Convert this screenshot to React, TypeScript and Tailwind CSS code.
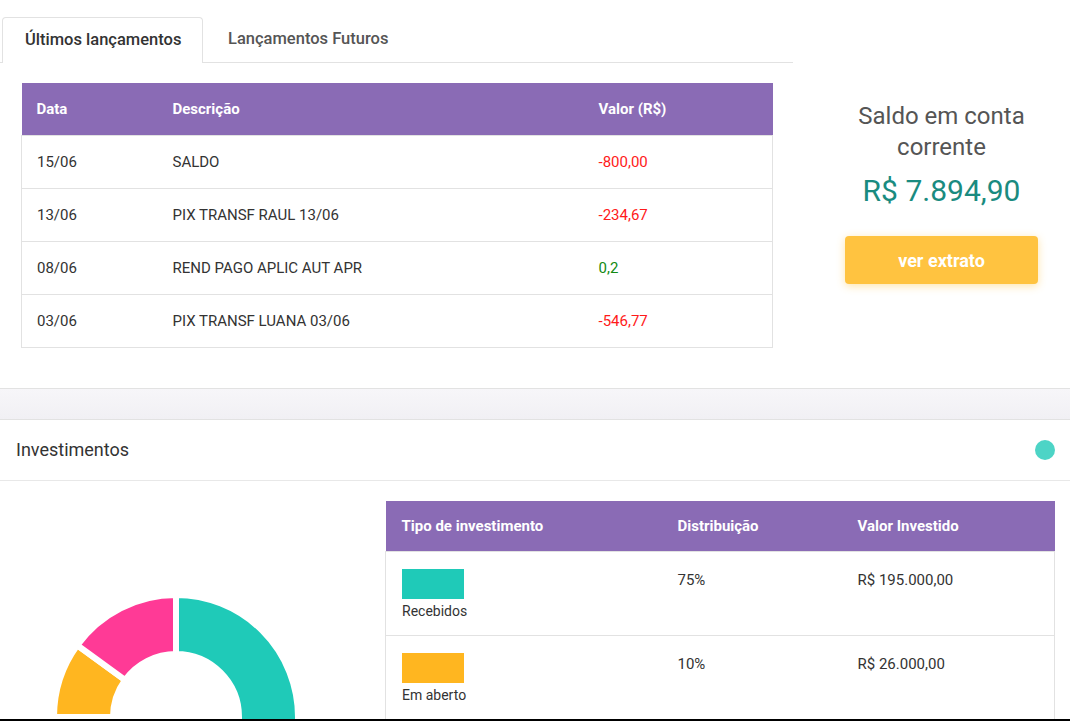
import React from "react";

const lancamentos = [
  { data: "15/06", desc: "SALDO", valor: "-800,00", neg: true },
  { data: "13/06", desc: "PIX TRANSF RAUL 13/06", valor: "-234,67", neg: true },
  { data: "08/06", desc: "REND PAGO APLIC AUT APR", valor: "0,2", neg: false },
  { data: "03/06", desc: "PIX TRANSF LUANA 03/06", valor: "-546,77", neg: true },
];

const investimentos = [
  { tipo: "Recebidos", cor: "bg-[#1fcab8]", dist: "75%", valor: "R$ 195.000,00" },
  { tipo: "Em aberto", cor: "bg-[#ffb620]", dist: "10%", valor: "R$ 26.000,00" },
];

// arc segment of a donut, angles in degrees from 12 o'clock clockwise
const arc = (cx: number, cy: number, r1: number, r2: number, a0: number, a1: number) => {
  const p = (r: number, a: number) => {
    const rad = ((a - 90) * Math.PI) / 180;
    return `${cx + r * Math.cos(rad)} ${cy + r * Math.sin(rad)}`;
  };
  const large = a1 - a0 > 180 ? 1 : 0;
  return `M ${p(r2, a0)} A ${r2} ${r2} 0 ${large} 1 ${p(r2, a1)} L ${p(r1, a1)} A ${r1} ${r1} 0 ${large} 0 ${p(r1, a0)} Z`;
};

const Donut = () => {
  const cx = 160;
  const cy = 216;
  const segs = [
    { a0: 0, a1: 270, fill: "#1fcab8" },
    { a0: 270, a1: 306, fill: "#ffb620" },
    { a0: 306, a1: 360, fill: "#ff3a96" },
  ];
  return (
    <svg width="340" height="220" viewBox="0 0 340 220">
      {segs.map((s) => (
        <path
          key={s.a0}
          d={arc(cx, cy, 63, 122, s.a0, s.a1)}
          fill={s.fill}
          stroke="#ffffff"
          strokeWidth="6"
        />
      ))}
    </svg>
  );
};

const App = () => {
  return (
    <div
      className="w-[1070px] h-[721px] overflow-hidden bg-white text-[#333] border-b-2 border-black box-border"
      style={{ fontFamily: "Roboto, 'Liberation Sans', sans-serif" }}
    >
      {/* topo: lançamentos + saldo */}
      <div className="flex">
        <div className="w-[793px] pt-[17px]">
          <div className="flex border-b border-[#e2e2e2] h-[46px]">
            <div className="ml-[2px] w-[201px] h-[46px] border border-b-0 border-[#e2e2e2] rounded-t-[4px] bg-white flex items-center pl-[22px] text-[16.5px] font-medium text-[#333]">
              Últimos lançamentos
            </div>
            <div className="flex items-center pl-[25px] text-[16.5px] font-medium text-[#555]">
              Lançamentos Futuros
            </div>
          </div>

          <div className="pl-[21px] pr-[20px] pt-[20px] pb-[40px]">
            <table className="w-[752px] border-collapse text-[15px] table-fixed">
              <thead>
                <tr className="bg-[#8a6bb5] text-white h-[52px]">
                  <th className="w-[136px] text-left font-bold pl-[15px]">Data</th>
                  <th className="w-[426px] text-left font-bold pl-[15px]">Descrição</th>
                  <th className="text-left font-bold pl-[15px]">Valor (R$)</th>
                </tr>
              </thead>
              <tbody>
                {lancamentos.map((l) => (
                  <tr key={l.data} className="h-[53px] border border-[#e2e2e2]">
                    <td className="pl-[15px] pt-[1px] text-[#333]">{l.data}</td>
                    <td className="pl-[15px] pt-[1px] text-[#333]">{l.desc}</td>
                    <td className={`pl-[15px] pt-[1px] ${l.neg ? "text-[#ff1a1a]" : "text-[#138a13]"}`}>{l.valor}</td>
                  </tr>
                ))}
              </tbody>
            </table>
          </div>
        </div>

        <div className="flex-1 ml-[20px] flex flex-col items-center pt-[101px]">
          <div className="text-[24px] leading-[31px] text-[#555] text-center">
            Saldo em conta
            <br />
            corrente
          </div>
          <div className="text-[30px] leading-[40px] text-[#1a8b80] mt-[8px]">R$ 7.894,90</div>
          <button className="mt-[25px] w-[193px] h-[48px] rounded-[4px] bg-[#ffc340] text-white font-bold text-[18px] shadow-[0_2px_8px_rgba(255,195,64,0.45)]">
            ver extrato
          </button>
        </div>
      </div>

      {/* faixa separadora */}
      <div className="h-[32px] border-t border-b border-[#e2e2e2] bg-gradient-to-b from-[#f7f6f9] to-[#f1f0f4]" />

      {/* investimentos */}
      <div className="h-[61px] border-b border-[#e8e8e8] flex items-center justify-between pl-[16px] pr-[15px]">
        <span className="text-[18px] text-[#333]">Investimentos</span>
        <span className="w-[20px] h-[20px] rounded-full bg-[#4dd4c6]" />
      </div>

      <div className="flex pt-[20px]">
        <div className="w-[385px] pl-[16px]">
          <Donut />
        </div>
        <div className="w-[670px]">
          <table className="w-[670px] border-collapse text-[15px] table-fixed">
            <thead>
              <tr className="bg-[#8a6bb5] text-white h-[51px]">
                <th className="w-[277px] text-left font-bold pl-[16px]">Tipo de investimento</th>
                <th className="w-[180px] text-left font-bold pl-[15px]">Distribuição</th>
                <th className="text-left font-bold pl-[15px]">Valor Investido</th>
              </tr>
            </thead>
            <tbody>
              {investimentos.map((i) => (
                <tr key={i.tipo} className="h-[84px] border border-[#e2e2e2] align-top">
                  <td className="pl-[16px] pt-[17px]">
                    <div className={`w-[62px] h-[30px] ${i.cor}`} />
                    <div className="text-[14px] text-[#333] mt-[2px]">{i.tipo}</div>
                  </td>
                  <td className="pl-[15px] pt-[17px] text-[#333]">{i.dist}</td>
                  <td className="pl-[15px] pt-[17px] text-[#333]">{i.valor}</td>
                </tr>
              ))}
            </tbody>
          </table>
        </div>
      </div>
    </div>
  );
};

export default App;
